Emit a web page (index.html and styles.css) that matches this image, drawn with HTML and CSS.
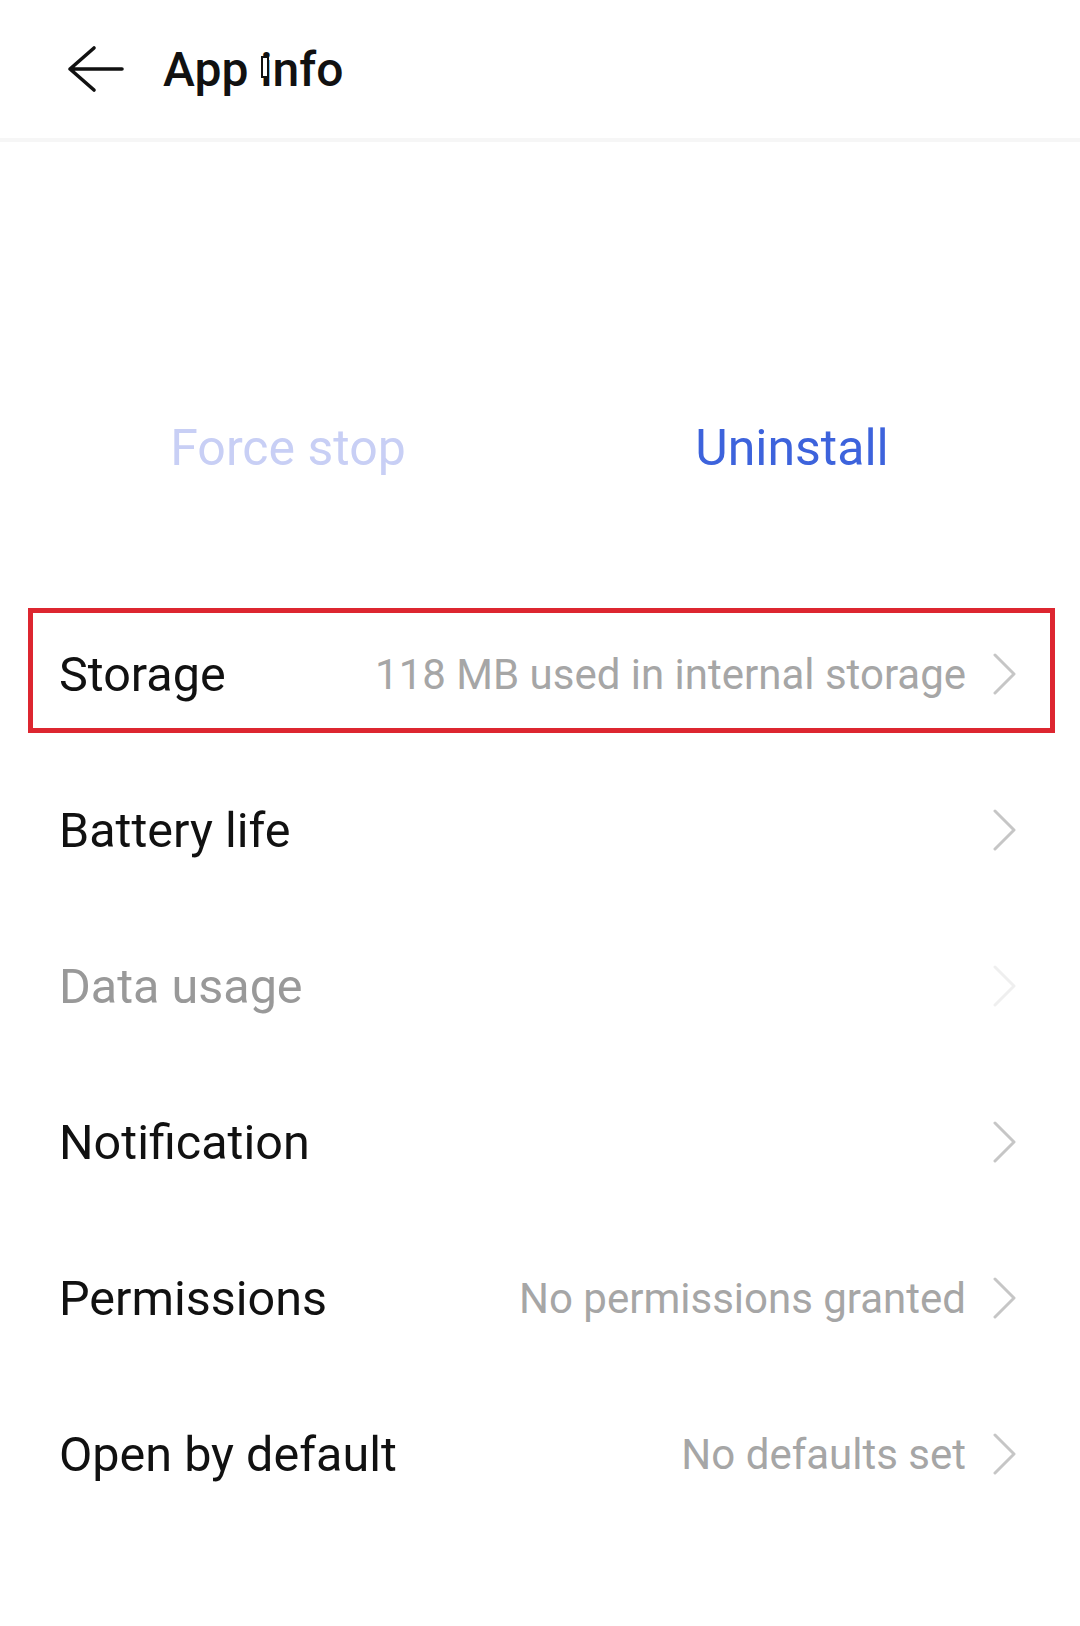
FILE: index.html
```html
<!DOCTYPE html>
<html lang="en">
<head>
    <meta charset="UTF-8">
    <meta name="viewport" content="width=device-width, initial-scale=1.0">
    <title>App info</title>
    <link rel="stylesheet" href="styles.css">
</head>
<body>
    <div class="header">
        <svg class="back" width="60" height="52" viewBox="0 0 60 52">
            <path d="M4 26 H56 M28 5 L4 26 L28 47" fill="none" stroke="#111" stroke-width="3.6" stroke-linecap="round" stroke-linejoin="round"/>
        </svg>
        <h1>App <span class="cursor-wrap">info<span class="cursor"></span></span></h1>
    </div>

    <div class="actions">
        <div class="action disabled">Force stop</div>
        <div class="action">Uninstall</div>
    </div>

    <div class="list">
        <div class="row">
            <span class="label">Storage</span>
            <span class="value">118 MB used in internal storage</span>
            <svg class="chevron" width="24" height="44" viewBox="0 0 24 44"><polyline points="3,3 22,22 3,41"/></svg>
            <div class="highlight"></div>
        </div>
        <div class="row">
            <span class="label">Battery life</span>
            <svg class="chevron" width="24" height="44" viewBox="0 0 24 44"><polyline points="3,3 22,22 3,41"/></svg>
        </div>
        <div class="row off">
            <span class="label">Data usage</span>
            <svg class="chevron" width="24" height="44" viewBox="0 0 24 44"><polyline points="3,3 22,22 3,41"/></svg>
        </div>
        <div class="row">
            <span class="label">Notification</span>
            <svg class="chevron" width="24" height="44" viewBox="0 0 24 44"><polyline points="3,3 22,22 3,41"/></svg>
        </div>
        <div class="row">
            <span class="label">Permissions</span>
            <span class="value">No permissions granted</span>
            <svg class="chevron" width="24" height="44" viewBox="0 0 24 44"><polyline points="3,3 22,22 3,41"/></svg>
        </div>
        <div class="row">
            <span class="label">Open by default</span>
            <span class="value">No defaults set</span>
            <svg class="chevron" width="24" height="44" viewBox="0 0 24 44"><polyline points="3,3 22,22 3,41"/></svg>
        </div>
    </div>
</body>
</html>
```

FILE: styles.css
```css
body {
    margin: 0;
    background: #fff;
    font-family: Roboto, 'Noto Sans', sans-serif;
    color: #111;
}
.header {
    display: flex;
    align-items: center;
    height: 138px;
    padding-left: 66px;
    border-bottom: 4px solid #f6f6f6;
}
.back {
    display: block;
}
h1 {
    margin: 0 0 0 37px;
    font-size: 48px;
    font-weight: 500;
}
.cursor-wrap {
    position: relative;
}
.cursor {
    position: absolute;
    left: 1px;
    top: 15px;
    width: 4px;
    height: 18px;
    background: #fff;
    border: 2px solid #111;
}
.actions {
    display: flex;
    padding: 266px 36px 108px;
}
.action {
    flex: 1;
    text-align: center;
    font-size: 50px;
    line-height: 80px;
    color: #3d63dc;
}
.action.disabled {
    color: #c8cff5;
}
.row {
    position: relative;
    display: flex;
    align-items: center;
    height: 156px;
    padding: 0 64px 0 59px;
}
.label {
    flex: 1;
    font-size: 48.5px;
}
.value {
    font-size: 42px;
    color: #a6a6a6;
    margin-right: 26px;
}
.chevron {
    display: block;
}
.chevron polyline {
    fill: none;
    stroke: #c6c6c6;
    stroke-width: 3;
    stroke-linecap: round;
    stroke-linejoin: round;
}
.row.off .label {
    color: #999;
}
.row.off .chevron polyline {
    stroke: #efefef;
}
.highlight {
    position: absolute;
    left: 28px;
    right: 25px;
    top: 12px;
    height: 115px;
    border: 5px solid #dd2630;
}
```
